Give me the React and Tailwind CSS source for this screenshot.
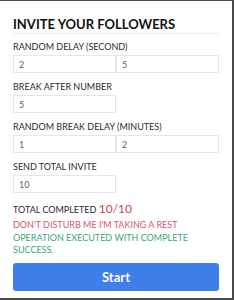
import React from "react";

const Field = ({ value }) => (
  <input
    readOnly
    value={value}
    className="block w-full h-[18px] border border-[#e6e6e6] bg-white px-[5px] text-[9px] text-[#666] outline-none"
  />
);

const Label = ({ children }) => (
  <div className="mt-[8px] text-[9px] leading-[11px] text-[#2a2a2a]">{children}</div>
);

export default function App() {
  return (
    <div
      className="w-[234px] h-[300px] bg-white border-t border-r-[2px] border-b-[2px] border-[#4a4a4a] flex flex-col px-[13px] pt-[16px]"
      style={{ fontFamily: "Lato, 'Open Sans', sans-serif" }}
    >
      <div className="text-[13px] leading-[14px] font-bold text-[#111] pb-[2px] border-b border-[#eeeeee] mb-[-1px]">
        INVITE YOUR FOLLOWERS
      </div>

      <Label>RANDOM DELAY (SECOND)</Label>
      <div className="grid grid-cols-2 mt-[3px]">
        <Field value="2" />
        <Field value="5" />
      </div>

      <Label>BREAK AFTER NUMBER</Label>
      <div className="w-[103px] mt-[3px]">
        <Field value="5" />
      </div>

      <Label>RANDOM BREAK DELAY (MINUTES)</Label>
      <div className="grid grid-cols-2 mt-[3px]">
        <Field value="1" />
        <Field value="2" />
      </div>

      <Label>SEND TOTAL INVITE</Label>
      <div className="w-[103px] mt-[3px]">
        <Field value="10" />
      </div>

      <div className="mt-[9px] text-[9px] leading-[14px] text-[#2a2a2a]">
        TOTAL COMPLETED <span className="text-[12px] text-[#c9444f]">10/10</span>
      </div>
      <div className="mt-[2px] text-[9px] leading-[12.5px] text-[#d9566a]">
        DON'T DISTURB ME I'M TAKING A REST
      </div>
      <div className="text-[9px] leading-[12.5px] text-[#3aa878]">
        OPERATION EXECUTED WITH COMPLETE
        <br />
        SUCCESS.
      </div>

      <button className="mt-[6px] h-[28px] w-full rounded-[3px] bg-[#3e7fe9] text-white text-[13px] leading-[28px] font-bold">
        Start
      </button>
    </div>
  );
}
